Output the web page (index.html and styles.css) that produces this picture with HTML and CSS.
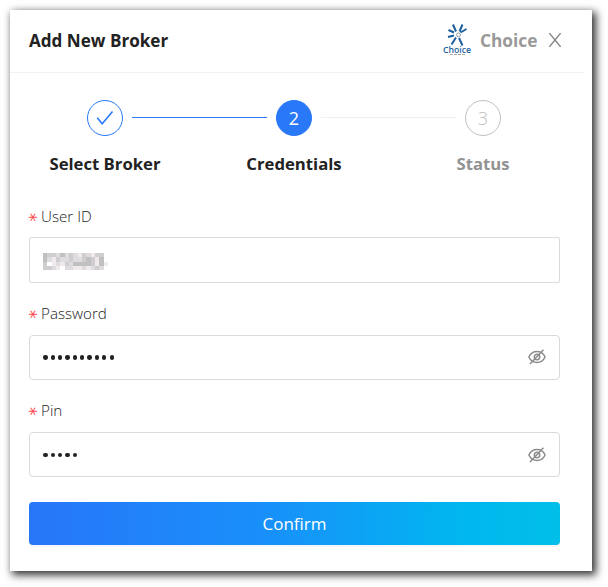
FILE: index.html
```html
<!DOCTYPE html>
<html lang="en">
<head>
<meta charset="utf-8">
<title>Add New Broker</title>
<link rel="stylesheet" href="styles.css">
</head>
<body>
<main class="dialog">
  <header class="header">
    <h1 class="title">Add New Broker</h1>
    <div class="brand">
      <div class="logo">
        <svg class="burst" width="22" height="22" viewBox="0 0 22 22" fill="none" stroke="#1d5f9f" stroke-width="2">
          <path d="M10 7.500L7 .5M13.500 7.500L16.500 .5M14.500 8.500L20.500 5M8 8.500L2.500 6M8 11.500L2 13M10 13.500L5.500 20.500M13 14L16.500 21.500"/>
          <circle cx="12.500" cy="10.800" r="1.900" stroke="#8d9aa5" stroke-width="1"/>
        </svg>
        <span class="logo-text">Choice</span>
        <span class="logo-rule"></span>
      </div>
      <span class="brand-name">Choice</span>
      <svg class="close" width="14" height="14" viewBox="0 0 14 14" fill="none" stroke="#858585" stroke-width="1.300"><path d="M1.300 0L12.700 14M12.700 0L1.300 14"/></svg>
    </div>
  </header>
  <section class="steps">
    <div class="step done">
      <div class="dot"><svg width="18" height="16" viewBox="0 0 18 16" fill="none" stroke="#2878f8" stroke-width="1.600"><path d="M1.200 7.700L6.200 13.700L16.500 1.600"/></svg></div>
      <div class="step-name">Select Broker</div>
    </div>
    <div class="line active"></div>
    <div class="step current">
      <div class="dot">2</div>
      <div class="step-name">Credentials</div>
    </div>
    <div class="line"></div>
    <div class="step wait">
      <div class="dot">3</div>
      <div class="step-name">Status</div>
    </div>
  </section>
  <form class="form">
    <div class="label user"><i>*</i>User ID</div>
    <div class="field first">
      <svg class="mosaic" width="65" height="17" viewBox="0 0 15 4" preserveAspectRatio="none" shape-rendering="crispEdges">
        <path fill="#c0c0c0" d="M0 0h1v1h-1zM4 0h1v1h-1zM0 1h1v1h-1zM7 2h4v1h-4zM13 1h1v2h-1zM10 1h1v1h-1z"/>
        <path fill="#cfcdcf" d="M1 0h2v1h-2zM0 2h1v1h-1zM3 1h1v1h-1zM6 0h1v2h-1zM9 0h1v1h-1zM9 1h1v1h-1zM12 0h2v1h-2zM11 1h1v2h-1zM5 2h1v1h-1zM0 3h2v1h-2zM12 3h1v1h-1z"/>
        <path fill="#dedcde" d="M3 0h1v1h-1zM5 0h1v2h-1zM7 0h1v1h-1zM10 0h1v1h-1zM1 1h1v1h-1zM4 1h1v1h-1zM7 1h2v1h-2zM3 2h1v1h-1zM6 2h1v1h-1zM2 3h1v1h-1zM5 3h2v1h-2zM9 3h1v1h-1zM11 3h1v1h-1zM13 3h1v1h-1z"/>
        <path fill="#f0eaee" d="M8 0h1v1h-1zM11 0h1v1h-1zM2 1h1v2h-1zM12 1h1v2h-1zM4 2h1v1h-1zM3 3h1v1h-1zM7 3h2v1h-2zM10 3h1v1h-1zM14 2h1v1h-1z"/>
      </svg>
    </div>
    <div class="label"><i>*</i>Password</div>
    <div class="field">
      <div class="bullets"><b></b><b></b><b></b><b></b><b></b><b></b><b></b><b></b><b></b><b></b></div>
      <svg class="eye" width="18" height="16" viewBox="0 0 18 16" fill="none" stroke="#8c8c8c" stroke-width="1.500"><path d="M.9 8C2.700 4.200 5.500 2.500 9 2.500S15.300 4.200 17.100 8C15.300 11.800 12.500 13.500 9 13.500S2.700 11.800.9 8Z"/><circle cx="9" cy="8" r="2.700"/><path d="M2 15L15.500.8"/></svg>
    </div>
    <div class="label"><i>*</i>Pin</div>
    <div class="field pin">
      <div class="bullets"><b></b><b></b><b></b><b></b><b></b></div>
      <svg class="eye" width="18" height="16" viewBox="0 0 18 16" fill="none" stroke="#8c8c8c" stroke-width="1.500"><path d="M.9 8C2.700 4.200 5.500 2.500 9 2.500S15.300 4.200 17.100 8C15.300 11.800 12.500 13.500 9 13.500S2.700 11.800.9 8Z"/><circle cx="9" cy="8" r="2.700"/><path d="M2 15L15.500.8"/></svg>
    </div>
    <button class="confirm" type="button">Confirm</button>
  </form>
</main>
</body>
</html>
```
FILE: styles.css
```css
* { box-sizing: border-box; }
body {
  margin: 0;
  padding: 10px;
  height: 587px;
  overflow: hidden;
  background: #fff;
  font-family: "Open Sans", "Noto Sans", sans-serif;
  color: #222;
}
.dialog {
  width: 582px;
  height: 561px;
  background: #fff;
  box-shadow: 3px 3px 8px 1px rgba(0, 0, 0, .8);
}
.header {
  display: flex;
  justify-content: space-between;
  width: 575px;
  height: 63px;
  padding: 0 23px 0 19px;
  border-bottom: 1px solid #f2f2f2;
}
.title { margin: 0; font-size: 17.100px; font-weight: 700; line-height: 62px; }
.brand { display: flex; height: 60px; align-items: center; color: #999; }
.logo { width: 28px; height: 32px; margin-right: 9px; display: flex; flex-direction: column; align-items: center; }
.burst { display: block; flex: none; }
.logo-text { height: 8px; font-size: 8.700px; font-weight: 600; line-height: 8px; color: #1d5f9f; }
.logo-rule { width: 15px; border-top: 1px dashed #a9a9a9; }
.brand-name { width: 57px; font-size: 17.300px; font-weight: 700; }
.close { margin-left: 11px; }
.steps { display: flex; padding: 27px 0 0 28px; height: 127px; }
.step { width: 134px; display: flex; flex-direction: column; align-items: center; }
.dot {
  width: 36px; height: 36px;
  border: 1px solid #2878f8;
  border-radius: 50%;
  display: flex; align-items: center; justify-content: center;
  font-size: 18px;
}
.current .dot { background: #2878f8; color: #fff; }
.wait .dot { border-color: #bfbfbf; color: #bfbfbf; font-weight: 300; }
.step-name { margin-top: 15px; font-size: 16.700px; font-weight: 700; line-height: 26px; white-space: nowrap; }
.wait .step-name { color: #929292; }
.line { height: 1px; width: 135px; margin: 17px -40px 0; background: #f0f0f0; }
.line.active { background: #2878f8; }
.form { padding: 0 0 0 19px; width: 550px; }
.label { display: flex; height: 37px; padding-top: 3px; font-size: 15.200px; font-weight: 300; line-height: 25px; }
.label.user { padding-top: 4px; }
.label i {
  width: 8px;
  height: 8px;
  margin: 9px 4px 0 0;
  color: #ff4d4f;
  font: 400 17px/14px "DejaVu Sans", sans-serif;
  text-align: center;
  transform: rotate(90deg);
}
.field {
  height: 45px;
  margin-bottom: 15px;
  border: 1px solid #dadada;
  border-radius: 4px;
  padding: 0 13px 1px 12px;
  display: flex; align-items: center; justify-content: space-between;
}
.field.first { height: 46px; border-radius: 2px; padding-top: 3px; }
.field.pin { padding-bottom: 0; }
.mosaic { display: block; margin-left: 1px; }
.bullets { display: flex; gap: 3.070px; padding: 1px 0 0 1.300px; }
.bullets b { width: 4.300px; height: 4.300px; border-radius: 50%; background: #222; }
.confirm {
  display: block;
  width: 531px; height: 43px;
  margin-top: 25px;
  padding: 0 0 1px;
  border: 0; border-radius: 4px;
  background: linear-gradient(90deg, #2876f8, #1890fa 45%, #00b7ef 82%, #00bfe8);
  box-shadow: 0 2px 0 rgba(0, 0, 0, .035);
  color: #fff;
  font: 17px "Open Sans", sans-serif;
}
```
